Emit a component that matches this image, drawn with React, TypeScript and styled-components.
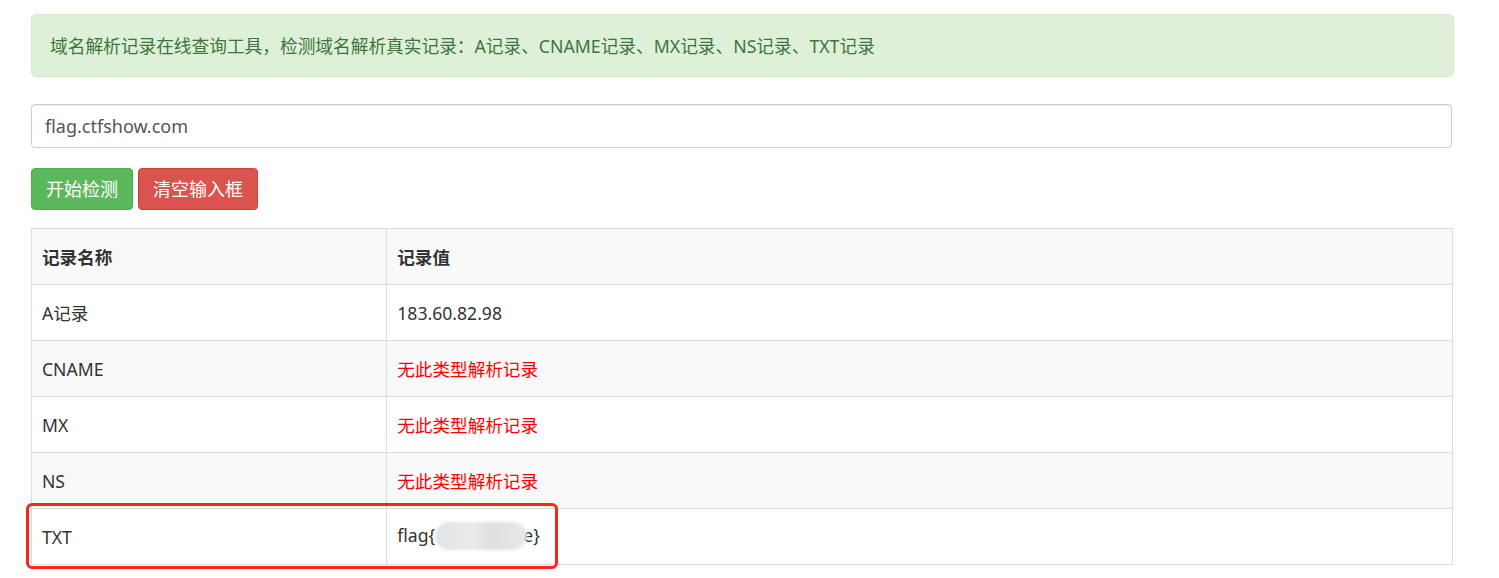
import React from "react";
import styled, { createGlobalStyle } from "styled-components";

const Global = createGlobalStyle`
  html, body { margin: 0; padding: 0; background: #fff; }
  body {
    font-family: "Noto Sans", "Noto Sans CJK SC", sans-serif;
    font-size: 18px;
    color: #333;
  }
  * { box-sizing: border-box; }
`;

const Page = styled.div`
  width: 1423px;
  margin-left: 31px;
  padding-top: 14px;
  padding-bottom: 14px;
  display: flex;
  flex-direction: column;
`;

const Alert = styled.div`
  height: 63px;
  display: flex;
  align-items: center;
  padding: 0 18px;
  background: #dff0d8;
  border: 1px solid #d6e9c6;
  border-radius: 5px;
  color: #3c763d;
  font-size: 17.7px;
  line-height: 24px;
`;

const Input = styled.input`
  margin-top: 27px;
  width: 1421px;
  height: 44px;
  padding: 0 13px;
  border: 1px solid #ccc;
  border-radius: 4px;
  box-shadow: inset 0 1px 1px rgba(0, 0, 0, 0.075);
  font-family: "Noto Sans", "Noto Sans CJK SC", sans-serif;
  font-size: 18px;
  color: #555;
  outline: none;
`;

const Buttons = styled.div`
  margin-top: 20px;
  display: flex;
  gap: 5px;
`;

const Button = styled.button<{ $variant: "success" | "danger" }>`
  height: 42px;
  padding: 0 14px;
  border-radius: 4px;
  border: 1px solid ${(p) => (p.$variant === "success" ? "#4cae4c" : "#d43f3a")};
  background: ${(p) => (p.$variant === "success" ? "#5cb85c" : "#d9534f")};
  color: #fff;
  font-family: "Noto Sans", "Noto Sans CJK SC", sans-serif;
  font-size: 18px;
  line-height: 24px;
  cursor: pointer;
`;

const TableWrap = styled.div`
  margin-top: 18px;
  width: 1422px;
  position: relative;
`;

const Table = styled.table`
  width: 100%;
  border-collapse: collapse;
  border: 1px solid #ddd;
`;

const Row = styled.tr<{ $striped?: boolean }>`
  background: ${(p) => (p.$striped ? "#f9f9f9" : "#fff")};
`;

const Cell = styled.td<{ $head?: boolean; $red?: boolean }>`
  border: 1px solid #ddd;
  height: 56px;
  padding: 0 10px;
  vertical-align: middle;
  font-size: 17.6px;
  line-height: 24px;
  font-weight: ${(p) => (p.$head ? 700 : 400)};
  color: ${(p) => (p.$red ? "#ff0000" : "#333")};
`;

const Blur = styled.span`
  display: inline-block;
  vertical-align: middle;
  width: 92px;
  height: 28px;
  margin: -4px -4px 0 0;
  border-radius: 14px;
  background: linear-gradient(90deg, #e3e3e3, #ebebeb 40%, #dedede 60%, #e9e9e9);
  filter: blur(1.5px);
`;

const Marker = styled.div`
  position: absolute;
  left: -5px;
  top: 275px;
  width: 532px;
  height: 66px;
  border: 3px solid #f8271a;
  border-radius: 6px;
  pointer-events: none;
`;

const rows: { name: string; value: React.ReactNode; red?: boolean }[] = [
  { name: "A记录", value: "183.60.82.98" },
  { name: "CNAME", value: "无此类型解析记录", red: true },
  { name: "MX", value: "无此类型解析记录", red: true },
  { name: "NS", value: "无此类型解析记录", red: true },
  {
    name: "TXT",
    value: (
      <>
        flag{"{"}
        <Blur />
        e{"}"}
      </>
    ),
  },
];

export default function App() {
  return (
    <>
      <Global />
      <Page>
        <Alert>
          域名解析记录在线查询工具，检测域名解析真实记录：A记录、CNAME记录、MX记录、NS记录、TXT记录
        </Alert>
        <Input defaultValue="flag.ctfshow.com" />
        <Buttons>
          <Button $variant="success">开始检测</Button>
          <Button $variant="danger">清空输入框</Button>
        </Buttons>
        <TableWrap>
          <Table>
            <colgroup>
              <col style={{ width: "25%" }} />
              <col style={{ width: "75%" }} />
            </colgroup>
            <tbody>
              <Row $striped>
                <Cell $head>记录名称</Cell>
                <Cell $head>记录值</Cell>
              </Row>
              {rows.map((r, i) => (
                <Row key={r.name} $striped={i % 2 === 1}>
                  <Cell>{r.name}</Cell>
                  <Cell $red={r.red}>{r.value}</Cell>
                </Row>
              ))}
            </tbody>
          </Table>
          <Marker />
        </TableWrap>
      </Page>
    </>
  );
}
